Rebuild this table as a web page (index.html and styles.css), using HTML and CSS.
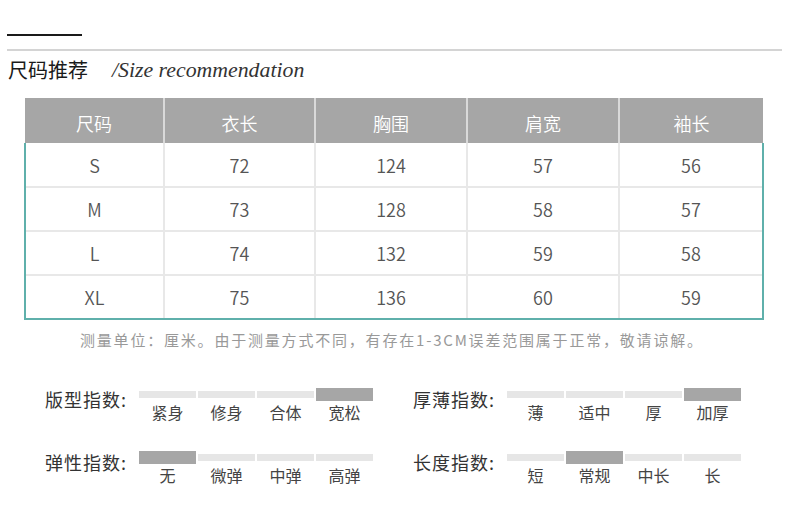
FILE: index.html
```html
<!DOCTYPE html>
<html lang="zh">
<head>
<meta charset="utf-8">
<link rel="stylesheet" href="styles.css">
</head>
<body>
<div class="page">
  <div class="rules">
    <div class="short-line"></div>
    <div class="long-line"></div>
  </div>
  <div class="title">
    <span class="title-cn">尺码推荐</span>
    <span class="title-en">/Size recommendation</span>
  </div>
  <table class="size-table">
    <colgroup>
      <col class="c1"><col class="c2"><col class="c3"><col class="c4"><col class="c5">
    </colgroup>
    <thead>
      <tr><th>尺码</th><th>衣长</th><th>胸围</th><th>肩宽</th><th>袖长</th></tr>
    </thead>
    <tbody>
      <tr><td>S</td><td>72</td><td>124</td><td>57</td><td>56</td></tr>
      <tr><td>M</td><td>73</td><td>128</td><td>58</td><td>57</td></tr>
      <tr><td>L</td><td>74</td><td>132</td><td>59</td><td>58</td></tr>
      <tr class="last"><td>XL</td><td>75</td><td>136</td><td>60</td><td>59</td></tr>
    </tbody>
  </table>
  <p class="note">测量单位：厘米。由于测量方式不同，有存在1-3CM误差范围属于正常，敬请谅解。</p>
  <div class="indexes">
    <div class="group">
      <div class="g-label">版型指数:</div>
      <div class="scale">
        <div class="cell"><div class="bar"></div><span>紧身</span></div>
        <div class="cell"><div class="bar"></div><span>修身</span></div>
        <div class="cell"><div class="bar"></div><span>合体</span></div>
        <div class="cell on"><div class="bar"></div><span>宽松</span></div>
      </div>
    </div>
    <div class="group">
      <div class="g-label">厚薄指数:</div>
      <div class="scale">
        <div class="cell"><div class="bar"></div><span>薄</span></div>
        <div class="cell"><div class="bar"></div><span>适中</span></div>
        <div class="cell"><div class="bar"></div><span>厚</span></div>
        <div class="cell on"><div class="bar"></div><span>加厚</span></div>
      </div>
    </div>
    <div class="group">
      <div class="g-label">弹性指数:</div>
      <div class="scale">
        <div class="cell on"><div class="bar"></div><span>无</span></div>
        <div class="cell"><div class="bar"></div><span>微弹</span></div>
        <div class="cell"><div class="bar"></div><span>中弹</span></div>
        <div class="cell"><div class="bar"></div><span>高弹</span></div>
      </div>
    </div>
    <div class="group">
      <div class="g-label">长度指数:</div>
      <div class="scale">
        <div class="cell"><div class="bar"></div><span>短</span></div>
        <div class="cell on"><div class="bar"></div><span>常规</span></div>
        <div class="cell"><div class="bar"></div><span>中长</span></div>
        <div class="cell"><div class="bar"></div><span>长</span></div>
      </div>
    </div>
  </div>
</div>
</body>
</html>
```

FILE: styles.css
```css
html, body {
  margin: 0;
  padding: 0;
  background: #fff;
}
body {
  font-family: "Noto Sans CJK SC", "Noto Sans", sans-serif;
  color: #333;
}
.page {
  width: 790px;
}
.rules {
  padding: 34px 0 0 7px;
}
.short-line {
  width: 75px;
  height: 2px;
  background: #1a1a1a;
}
.long-line {
  margin-top: 13px;
  width: 775px;
  height: 2px;
  background: #d4d4d4;
}
.title {
  margin: 7px 0 0 8px;
  height: 24px;
  line-height: 24px;
  display: flex;
  align-items: center;
}
.title-cn {
  font-size: 20px;
  color: #1a1a1a;
  font-family: "Noto Sans CJK SC", sans-serif;
}
.title-en {
  margin-left: 24px;
  font-size: 21.8px;
  font-style: italic;
  font-family: "Liberation Serif", serif;
  color: #333;
}
.size-table {
  margin: 16px 0 0 24px;
  width: 738px;
  table-layout: fixed;
  border-collapse: collapse;
  font-weight: 350;
}
.c1 { width: 139px; }
.c2 { width: 151px; }
.c3 { width: 152px; }
.c4 { width: 152px; }
.c5 { width: 144px; }
.size-table th {
  height: 45px;
  padding: 0;
  background: #a6a6a6;
  color: #fff;
  font-size: 18px;
  font-weight: 350;
  border-left: 2px solid #d9d9d9;
  padding-top: 4px;
  box-sizing: border-box;
}
.size-table th:first-child {
  border-left: none;
}
.size-table td {
  height: 42px;
  padding: 0;
  text-align: center;
  font-size: 18px;
  color: #555;
  border-left: 2px solid #e8e8e8;
  border-top: 2px solid #e8e8e8;
}
.size-table tbody tr:first-child td {
  border-top: none;
  height: 43px;
}
.size-table td:first-child {
  border-left: 2px solid #5fb0ab;
}
.size-table td:last-child {
  border-right: 2px solid #5fb0ab;
}
.size-table tr.last td {
  border-bottom: 2px solid #5fb0ab;
  height: 42px;
}
.note {
  margin: 10px 0 0 80px;
  font-size: 15px;
  line-height: 20px;
  letter-spacing: 1.8px;
  color: #999;
}
.indexes {
  margin-top: 38px;
  padding-left: 45px;
  display: grid;
  grid-template-columns: 368px 368px;
  row-gap: 28px;
}
.group {
  display: flex;
}
.g-label {
  width: 94px;
  font-size: 18px;
  line-height: 22px;
  letter-spacing: 1px;
  color: #333;
}
.scale {
  display: grid;
  grid-template-columns: repeat(4, 57px);
  column-gap: 2px;
}
.cell {
  display: flex;
  flex-direction: column;
  align-items: center;
}
.cell .bar {
  width: 57px;
  height: 7px;
  margin: 3px 0 3px;
  background: #e6e6e6;
}
.cell.on .bar {
  height: 13px;
  margin: 0;
  background: #a6a6a6;
}
.cell span {
  margin-top: 0;
  font-size: 16px;
  line-height: 22px;
  color: #444;
}
```
